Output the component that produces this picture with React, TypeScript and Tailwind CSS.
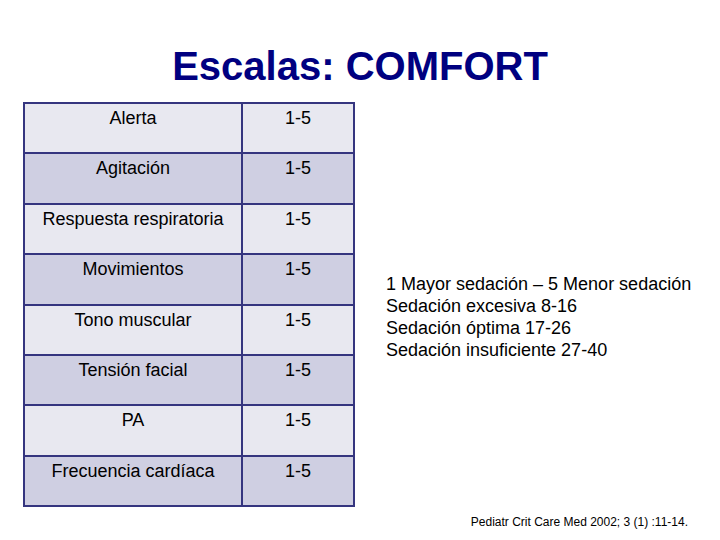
import React from "react";

const rows: [string, string][] = [
  ["Alerta", "1-5"],
  ["Agitación", "1-5"],
  ["Respuesta respiratoria", "1-5"],
  ["Movimientos", "1-5"],
  ["Tono muscular", "1-5"],
  ["Tensión facial", "1-5"],
  ["PA", "1-5"],
  ["Frecuencia cardíaca", "1-5"],
];

export default function App() {
  return (
    <div
      className="w-[720px] h-[540px] bg-white overflow-hidden flex flex-col"
      style={{ fontFamily: '"Liberation Sans", Arial, sans-serif' }}
    >
      <h1 className="pt-[46px] text-center text-[40px] leading-none font-bold text-[#000080]">
        Escalas: COMFORT
      </h1>
      <div className="flex mt-[16px] pl-[23px]">
        <div className="w-[332px] border-2 border-[#35357f] flex flex-col">
          {rows.map(([a, b], i) => (
            <div
              key={i}
              className={`flex ${i < rows.length - 1 ? "h-[50.4px] border-b-2 border-[#35357f]" : "h-[48.4px]"} ${
                i % 2 === 0 ? "bg-[#e8e8f0]" : "bg-[#cfcfe2]"
              }`}
            >
              <div className="w-[218px] border-r-2 border-[#35357f] text-center text-[18px] leading-[22px] pt-[3px] text-black">
                {a}
              </div>
              <div className="flex-1 text-center text-[18px] leading-[22px] pt-[3px] text-black">
                {b}
              </div>
            </div>
          ))}
        </div>
        <div className="ml-[31px] mt-[171px] text-[18px] leading-[22px] text-black">
          <div>1 Mayor sedación – 5 Menor sedación</div>
          <div>Sedación excesiva 8-16</div>
          <div>Sedación óptima 17-26</div>
          <div>Sedación insuficiente 27-40</div>
        </div>
      </div>
      <div className="flex justify-end pr-[32px] mt-[8px] text-[12px] leading-[14px] text-black">
        Pediatr Crit Care Med 2002; 3 (1) :11-14.
      </div>
    </div>
  );
}
